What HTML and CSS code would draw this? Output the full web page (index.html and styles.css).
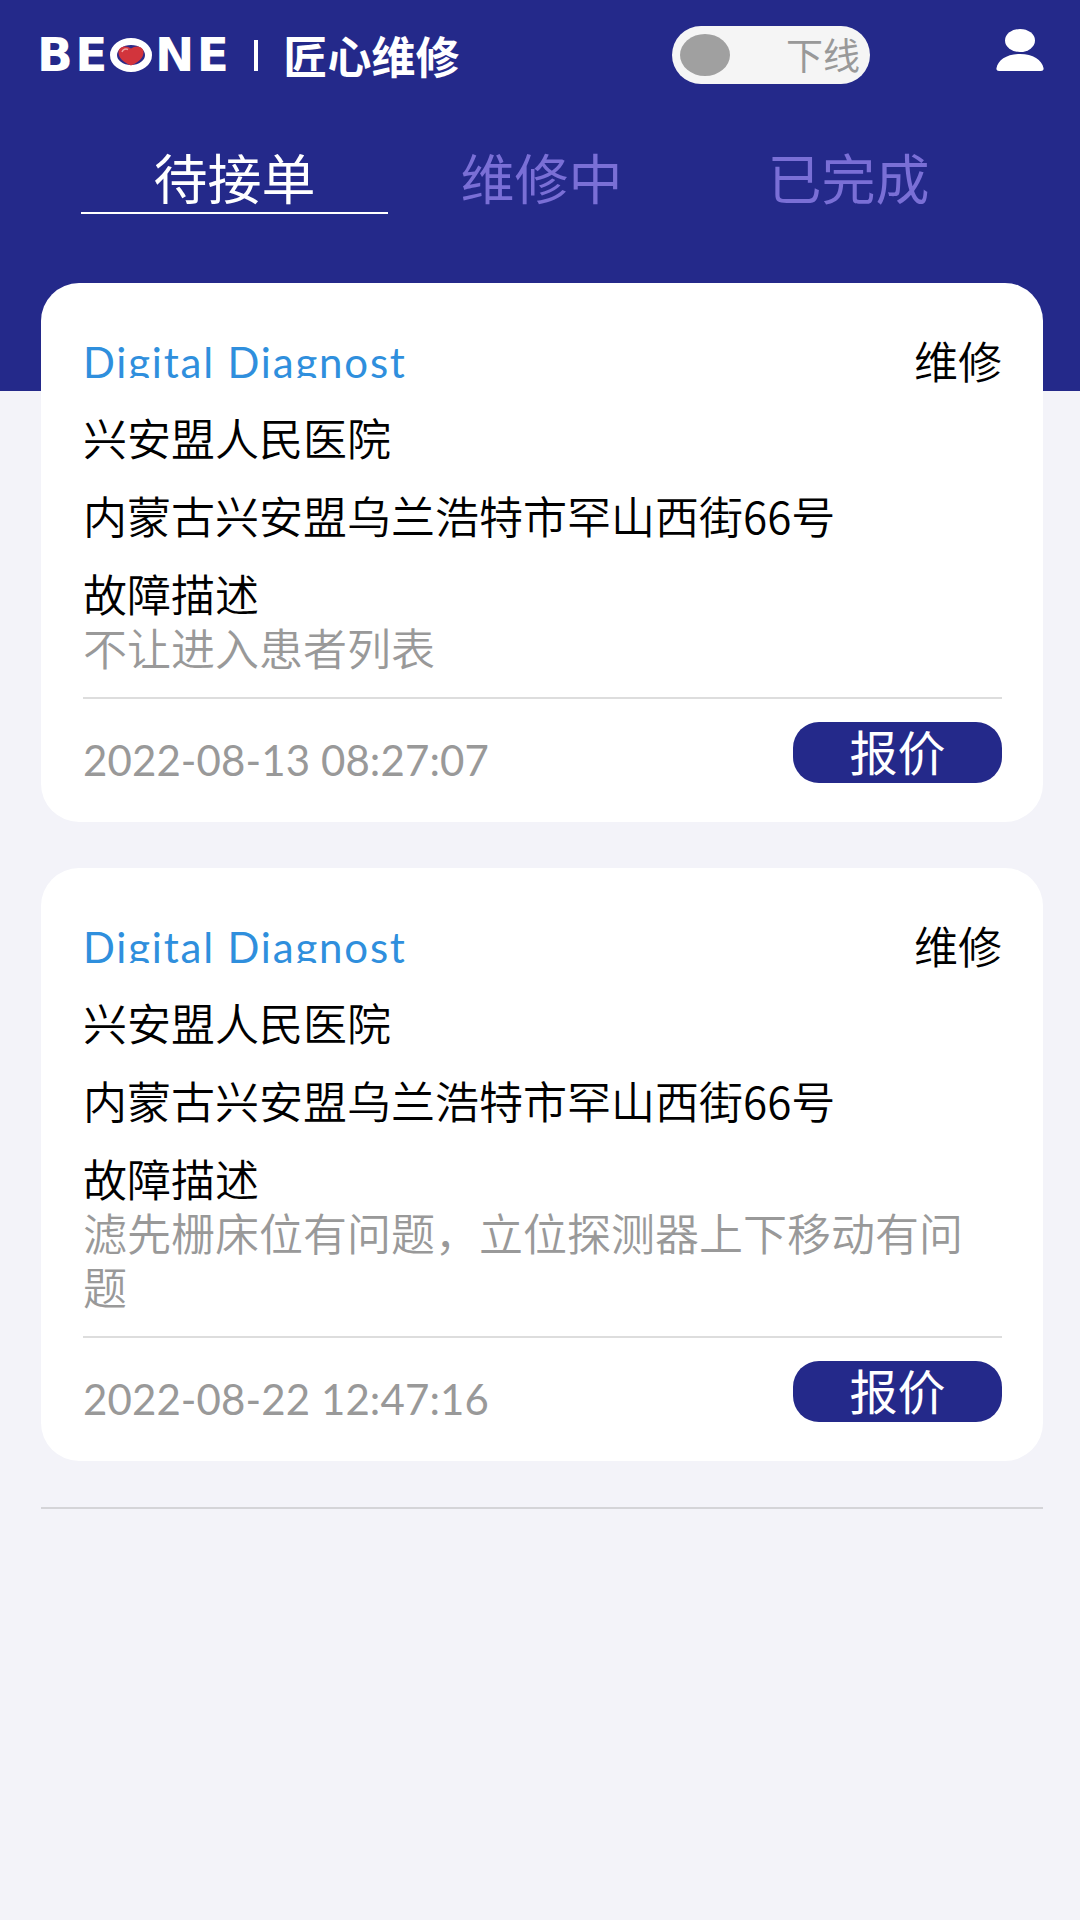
FILE: index.html
```html
<!DOCTYPE html>
<html>
<head>
  <title>匠心维修</title>
  <link rel="stylesheet" href="styles.css">
</head>
<body>
  <div class="header">
    <div class="topbar">
      <div class="logo">
        <span class="logo-word">BE</span>
        <svg class="logo-o" viewBox="0 0 44 36">
          <ellipse cx="22" cy="18" rx="17.500" ry="13.500" fill="#2c2a88" stroke="#fff" stroke-width="7"/>
          <path d="M22 28.500C14 25 9.500 21 9.500 15C9.500 9.500 17 7.500 22 11.500C27 7.500 34.500 9.500 34.500 15C34.500 21 30 25 22 28.500Z" fill="#d2343c"/>
          <path d="M13 15C14 12 17 11.500 19 12.500" fill="none" stroke="#f0a0a0" stroke-width="1.500"/>
        </svg>
        <span class="logo-word">NE</span>
        <span class="logo-bar"></span>
        <span class="logo-name">匠心维修</span>
      </div>
      <div class="switch">
        <span class="switch-knob"></span>
        <span class="switch-text">下线</span>
      </div>
      <svg class="user-icon" viewBox="0 0 48 42">
        <ellipse cx="24" cy="11.500" rx="15" ry="11.500" fill="#fff"/>
        <path d="M0.500 39C2 31 11 25 24 25C37 25 46 31 47.500 39C48 41 46.500 42 45 42H3C1.500 42 0 41 0.500 39Z" fill="#fff"/>
      </svg>
    </div>
    <div class="tabs">
      <div class="tab active">待接单</div>
      <div class="tab">维修中</div>
      <div class="tab">已完成</div>
    </div>
  </div>

  <div class="list">
    <div class="card">
      <div class="card-head">
        <div class="device">Digital Diagnost</div>
        <div class="kind">维修</div>
      </div>
      <div class="row">兴安盟人民医院</div>
      <div class="row">内蒙古兴安盟乌兰浩特市罕山西街66号</div>
      <div class="row">故障描述</div>
      <div class="desc">不让进入患者列表</div>
      <div class="card-foot">
        <div class="time">2022-08-13 08:27:07</div>
        <button class="quote">报价</button>
      </div>
    </div>

    <div class="card">
      <div class="card-head">
        <div class="device">Digital Diagnost</div>
        <div class="kind">维修</div>
      </div>
      <div class="row">兴安盟人民医院</div>
      <div class="row">内蒙古兴安盟乌兰浩特市罕山西街66号</div>
      <div class="row">故障描述</div>
      <div class="desc">滤先栅床位有问题，立位探测器上下移动有问题</div>
      <div class="card-foot">
        <div class="time">2022-08-22 12:47:16</div>
        <button class="quote">报价</button>
      </div>
    </div>

    <div class="list-end"></div>
  </div>
</body>
</html>
```

FILE: styles.css
```css
body {
  margin: 0;
  min-height: 1920px;
  background-color: #f3f3f9;
  font-family: "Noto Sans CJK SC", sans-serif;
  font-weight: 350;
  color: #000;
}

.header {
  height: 391px;
  background-color: #24298a;
  box-sizing: border-box;
  padding: 26px 36px 0 37px;
}

.topbar {
  display: flex;
  align-items: center;
  height: 58px;
}

.logo {
  display: flex;
  align-items: center;
  width: 635px;
  color: #fff;
}

.logo-word {
  font-family: "DejaVu Sans", sans-serif;
  font-weight: bold;
  font-size: 47px;
  letter-spacing: 2.500px;
  line-height: 58px;
}

.logo-o {
  width: 44px;
  height: 36px;
  margin-left: -1px;
  margin-right: 2px;
}

.logo-bar {
  width: 4px;
  height: 31px;
  margin: 0 25px 0 23px;
  background-color: #fff;
}

.logo-name {
  font-size: 44px;
  font-weight: bold;
  line-height: 58px;
}

.switch {
  display: flex;
  align-items: center;
  justify-content: space-between;
  width: 198px;
  height: 58px;
  box-sizing: border-box;
  padding: 0 10px 0 8px;
  border-radius: 29px;
  background-color: #f5f5f5;
}

.switch-knob {
  width: 50px;
  height: 42px;
  border-radius: 50%;
  background-color: #a0a0a0;
}

.switch-text {
  font-size: 37px;
  font-weight: 400;
  color: #999;
  margin-top: -3px;
}

.user-icon {
  width: 48px;
  height: 42px;
  margin: -10px 0 0 126px;
}

.tabs {
  display: flex;
  margin: 60px 0 0 44px;
}

.tab {
  width: 307px;
  height: 70px;
  box-sizing: border-box;
  text-align: center;
  font-size: 54px;
  font-weight: 400;
  line-height: 66px;
  color: #7a6fd6;
}

.tab.active {
  color: #fff;
  border-bottom: 2px solid #fff;
}

.list {
  margin: -108px 37px 0 41px;
}

.card {
  margin-bottom: 46px;
  padding: 40px 41px 39px 42px;
  border-radius: 38px;
  background-color: #fff;
}

.card-head {
  display: flex;
  justify-content: space-between;
  height: 62px;
  align-items: flex-start;
}

.device {
  height: 55px;
  overflow: hidden;
  font-family: Lato, sans-serif;
  font-weight: 400;
  font-size: 42px;
  letter-spacing: 1.800px;
  line-height: 78px;
  color: #2f8fdd;
}

.kind {
  font-size: 44px;
  line-height: 74px;
  height: 62px;
}

.row {
  margin-top: 26px;
  font-size: 44px;
  line-height: 52px;
}

.desc {
  margin-top: 1px;
  font-size: 44px;
  line-height: 54px;
  color: #999;
  border-bottom: 2px solid #ddd;
  padding-bottom: 23px;
}

.card-foot {
  display: flex;
  justify-content: space-between;
  align-items: center;
  margin-top: 23px;
}

.time {
  font-family: Lato, sans-serif;
  font-weight: 400;
  font-size: 42px;
  letter-spacing: 0.100px;
  line-height: 40px;
  color: #999;
  margin-top: 15px;
}

.quote {
  width: 209px;
  height: 61px;
  padding: 0 0 4px;
  border: none;
  border-radius: 26px;
  background-color: #24298a;
  color: #fff;
  font-family: "Noto Sans CJK SC", sans-serif;
  font-weight: 400;
  font-size: 48px;
  line-height: 57px;
}

.list-end {
  border-top: 2px solid #d4d4d8;
}
```
